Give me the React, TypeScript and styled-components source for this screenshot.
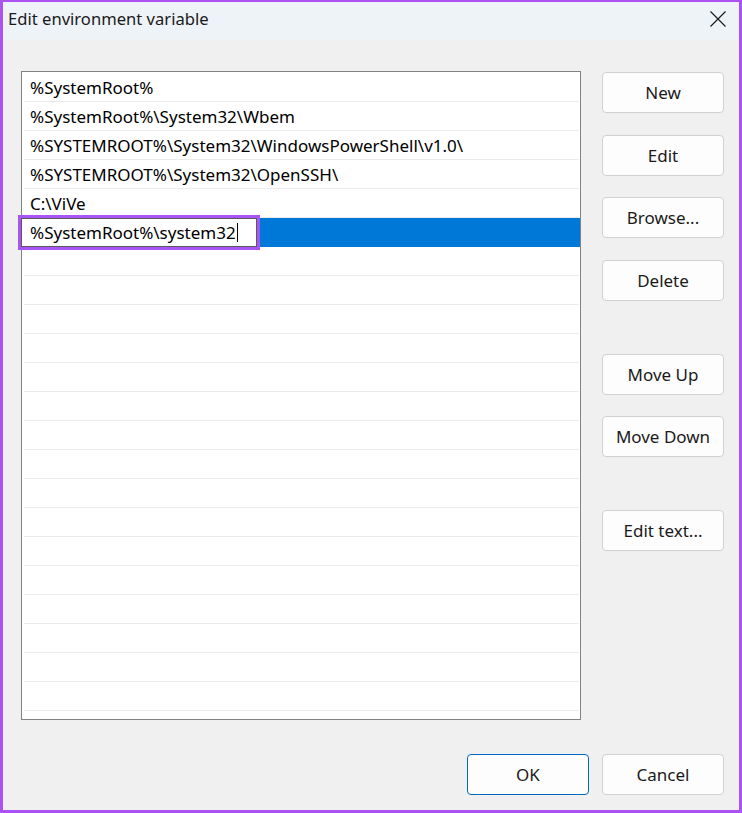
import React from "react";
import styled, { createGlobalStyle } from "styled-components";

const GlobalStyle = createGlobalStyle`
  html, body {
    margin: 0;
    padding: 0;
    background: #f0f0f0;
  }
  * {
    box-sizing: border-box;
  }
`;

const Window = styled.div`
  width: 742px;
  height: 813px;
  border: 3px solid #ad52f2;
  border-top-width: 2px;
  background: #f0f0f0;
  display: flex;
  flex-direction: column;
  font-family: "Noto Sans", "Open Sans", sans-serif;
  color: #000;
`;

const TitleBar = styled.div`
  height: 38px;
  flex-shrink: 0;
  background: #eef3f8;
  display: flex;
  align-items: center;
  justify-content: space-between;
  padding: 0 12px 5px 5px;
`;

const Title = styled.span`
  font-size: 16.6px;
  color: #1a1a1a;
`;

const CloseButton = styled.div`
  width: 18px;
  height: 18px;
  display: flex;
  align-items: center;
  justify-content: center;
`;

const Body = styled.div`
  flex: 1;
  display: flex;
  flex-direction: column;
  padding: 31px 15px 15px 18px;
`;

const Main = styled.div`
  display: flex;
  gap: 21px;
`;

const List = styled.div`
  width: 560px;
  height: 649px;
  border: 1px solid #828282;
  background: #fff;
  padding-top: 1px;
`;

const Row = styled.div<{ $selected?: boolean }>`
  height: 29px;
  display: flex;
  align-items: center;
  padding-left: 8px;
  font-size: 17px;
  background: ${(p) => (p.$selected ? "#0078d7" : "transparent")};
  position: relative;

  &::after {
    content: "";
    position: absolute;
    left: 2px;
    right: 1px;
    bottom: 0;
    height: 1px;
    background: ${(p) => (p.$selected ? "transparent" : "#ebebeb")};
  }
`;

const EditBox = styled.div`
  position: relative;
  z-index: 1;
  width: 236px;
  height: 29px;
  margin-left: -9px;
  margin-top: -1px;
  background: #fff;
  border: 1px solid #5a5a5a;
  outline: 3px solid #a855f7;
  display: flex;
  align-items: center;
  padding-left: 8px;
  font-size: 17px;
`;

const Caret = styled.span`
  display: inline-block;
  width: 1px;
  height: 19px;
  background: #000;
  margin-left: 1px;
`;

const ButtonColumn = styled.div`
  display: flex;
  flex-direction: column;
  padding-top: 1px;
`;

const Button = styled.button<{ $gap?: number; $primary?: boolean }>`
  width: 122px;
  height: 41px;
  margin-top: ${(p) => p.$gap ?? 0}px;
  border: 1px solid ${(p) => (p.$primary ? "#0067c0" : "#d1d1d1")};
  border-radius: 4px;
  background: #fdfdfd;
  font-family: "Noto Sans", "Open Sans", sans-serif;
  font-size: 17px;
  color: #1a1a1a;
  padding: 0 0 1px;
`;

const Footer = styled.div`
  display: flex;
  justify-content: flex-end;
  gap: 13px;
  margin-top: 34px;
`;

const paths = [
  "%SystemRoot%",
  "%SystemRoot%\\System32\\Wbem",
  "%SYSTEMROOT%\\System32\\WindowsPowerShell\\v1.0\\",
  "%SYSTEMROOT%\\System32\\OpenSSH\\",
  "C:\\ViVe",
];

const emptyRows = Array.from({ length: 16 });

export default function App() {
  return (
    <>
      <GlobalStyle />
      <Window>
        <TitleBar>
          <Title>Edit environment variable</Title>
          <CloseButton>
            <svg width="16" height="16" viewBox="0 0 16 16">
              <path d="M0.5 0.5 L15.5 15.5 M15.5 0.5 L0.5 15.5" stroke="#1a1a1a" strokeWidth="1.2" />
            </svg>
          </CloseButton>
        </TitleBar>
        <Body>
          <Main>
            <List>
              {paths.map((p) => (
                <Row key={p}>{p}</Row>
              ))}
              <Row $selected>
                <EditBox>
                  %SystemRoot%\system32
                  <Caret />
                </EditBox>
              </Row>
              {emptyRows.map((_, i) => (
                <Row key={i} />
              ))}
            </List>
            <ButtonColumn>
              <Button>New</Button>
              <Button $gap={22}>Edit</Button>
              <Button $gap={21}>Browse...</Button>
              <Button $gap={22}>Delete</Button>
              <Button $gap={53}>Move Up</Button>
              <Button $gap={21}>Move Down</Button>
              <Button $gap={53}>Edit text...</Button>
            </ButtonColumn>
          </Main>
          <Footer>
            <Button $primary>OK</Button>
            <Button>Cancel</Button>
          </Footer>
        </Body>
      </Window>
    </>
  );
}
